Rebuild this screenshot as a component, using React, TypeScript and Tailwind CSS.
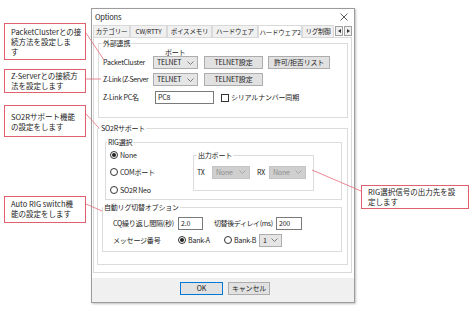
import React from "react";

// Small Windows-style controls used in the Options dialog
function Chevron({ color = "#606060" }: { color?: string }) {
  return (
    <svg width="7" height="4" viewBox="0 0 7 4" className="shrink-0">
      <polyline points="0.5,0.5 3.5,3.5 6.5,0.5" fill="none" stroke={color} strokeWidth="0.8" />
    </svg>
  );
}

function Btn({ className, children, primary }: { className: string; children: React.ReactNode; primary?: boolean }) {
  return (
    <div
      className={`flex h-[13px] shrink-0 items-center justify-center whitespace-nowrap border bg-[#e1e1e1] leading-none ${
        primary ? "border-[#0078d7]" : "border-[#adadad]"
      } ${className}`}
    >
      {children}
    </div>
  );
}

function Combo({ className, value, disabled }: { className: string; value: string; disabled?: boolean }) {
  return (
    <div
      className={`flex h-[13px] shrink-0 items-center justify-between border pl-[3px] pr-[3px] leading-none ${
        disabled ? "border-[#c4c4c4] bg-[#cfcfcf] text-[#8d8d8d]" : "border-[#adadad] bg-[#e5e5e5]"
      } ${className}`}
    >
      <span>{value}</span>
      <Chevron color={disabled ? "#9a9a9a" : "#606060"} />
    </div>
  );
}

function TextBox({ className, value }: { className: string; value: string }) {
  return (
    <div className={`flex h-[13px] shrink-0 items-center border border-[#7a7a7a] bg-white pl-[2px] leading-none ${className}`}>
      {value}
    </div>
  );
}

function Radio({ label, checked }: { label: string; checked?: boolean }) {
  return (
    <div className="flex items-center gap-[2px] whitespace-nowrap leading-none">
      <span className="flex h-[8px] w-[8px] shrink-0 items-center justify-center rounded-full border border-[#333] bg-white">
        {checked && <span className="h-[4px] w-[4px] rounded-full bg-[#222]" />}
      </span>
      <span>{label}</span>
    </div>
  );
}

function Callout({ className, children }: { className: string; children: React.ReactNode }) {
  return (
    <div
      className={`absolute whitespace-nowrap border border-[#e0606e] bg-white pl-[6px] text-[7.5px] leading-[10px] text-[#222] ${className}`}
    >
      {children}
    </div>
  );
}

const tabs = [
  { label: "カテゴリー", w: "w-[37px]" },
  { label: "CW/RTTY", w: "w-[37px]" },
  { label: "ボイスメモリ", w: "w-[45px]" },
  { label: "ハードウェア", w: "w-[46px]" },
  { label: "ハードウェア2", w: "w-[44px]", active: true },
  { label: "リグ制御", w: "w-[32px]" },
];

export default function App() {
  return (
    <div className="relative h-[317px] w-[474px] overflow-hidden bg-white font-['Noto_Sans_CJK_JP','Noto_Sans',sans-serif] text-[#1a1a1a]">
      {/* Options dialog */}
      <div className="absolute left-[91px] top-[8px] flex h-[295px] w-[264px] flex-col border border-[#9c9c9c] bg-white text-[7px] tracking-[-0.2px] shadow-[1px_1px_2px_rgba(0,0,0,0.25)]">
        {/* title bar */}
        <div className="flex h-[16px] items-center justify-between pl-[3px] pr-[6px] text-[7.5px]">
          <span>Options</span>
          <svg width="8" height="8" viewBox="0 0 8 8">
            <path d="M0.5 0.5 L7.5 7.5 M7.5 0.5 L0.5 7.5" stroke="#333" strokeWidth="0.8" />
          </svg>
        </div>

        {/* tabs */}
        <div className="relative z-10 ml-[1px] flex h-[12px] items-end text-[6.5px]">
          {tabs.map((t) => (
            <div
              key={t.label}
              className={`flex shrink-0 items-center justify-center overflow-hidden whitespace-nowrap border-x border-t border-[#d9d9d9] leading-none ${t.w} ${
                t.active ? "-mb-px h-[13px] bg-white" : "h-[12px] bg-[#f0f0f0]"
              }`}
            >
              {t.label}
            </div>
          ))}
          <div className="mb-[1px] ml-[1px] flex gap-[1px]">
            <div className="flex h-[10px] w-[8px] items-center justify-center border border-[#a0a0a0] bg-[#f0f0f0]">
              <svg width="3" height="4" viewBox="0 0 3 4"><polygon points="3,0 0,2 3,4" fill="#333" /></svg>
            </div>
            <div className="flex h-[10px] w-[8px] items-center justify-center border border-[#a0a0a0] bg-[#f0f0f0]">
              <svg width="3" height="4" viewBox="0 0 3 4"><polygon points="0,0 3,2 0,4" fill="#333" /></svg>
            </div>
          </div>
        </div>

        {/* tab page */}
        <div className="ml-[1px] mr-[2px] flex h-[236px] flex-col border border-[#d9d9d9] bg-white">
          {/* 外部連携 */}
          <fieldset className="ml-[4px] h-[80px] w-[250px] border border-[#dcdcdc]">
            <legend className="ml-[3px] px-[1px] leading-[10px]">外部連携</legend>
            <div className="flex h-[8px] items-center pl-[66px] leading-none">ポート</div>
            <div className="flex h-[13px] items-center pl-[4px]">
              <span className="w-[50px] shrink-0 whitespace-nowrap">PacketCluster</span>
              <Combo className="w-[45px]" value="TELNET" />
              <Btn className="ml-[6px] w-[59px]">TELNET設定</Btn>
              <Btn className="ml-[5px] w-[62px]">許可/拒否リスト</Btn>
            </div>
            <div className="mt-[4px] flex h-[13px] items-center pl-[4px]">
              <span className="w-[50px] shrink-0 whitespace-nowrap tracking-[-0.4px]">Z-Link (Z-Server</span>
              <Combo className="w-[45px]" value="TELNET" />
              <Btn className="ml-[6px] w-[59px]">TELNET設定</Btn>
            </div>
            <div className="mt-[5px] flex h-[13px] items-center pl-[4px]">
              <span className="w-[52px] shrink-0 whitespace-nowrap">Z-Link PC名</span>
              <TextBox className="w-[59px]" value="PC8" />
              <span className="ml-[7px] h-[8px] w-[8px] shrink-0 border border-[#333] bg-white" />
              <span className="ml-[2px] whitespace-nowrap">シリアルナンバー同期</span>
            </div>
          </fieldset>

          {/* SO2Rサポート */}
          <fieldset className="ml-[3px] mt-[5px] h-[142px] w-[251px] border border-[#dcdcdc]">
            <legend className="ml-[2px] px-[1px] leading-[10px]">SO2Rサポート</legend>

            <fieldset className="ml-[7px] mt-[4px] h-[63px] w-[237px] border border-[#dcdcdc]">
              <legend className="ml-[1px] px-[1px] leading-[10px]">RIG選択</legend>
              <div className="flex">
                <div className="flex w-[87px] flex-col pl-[4px]">
                  <div className="mt-[3px] flex h-[10px] items-center">
                    <Radio label="None" checked />
                  </div>
                  <div className="mt-[7px] flex h-[10px] items-center">
                    <Radio label="COMポート" />
                  </div>
                  <div className="mt-[8px] flex h-[10px] items-center">
                    <Radio label="SO2R Neo" />
                  </div>
                </div>
                <fieldset className="mt-[3px] h-[41px] w-[121px] border border-[#dcdcdc]">
                  <legend className="ml-[3px] px-[1px] leading-[10px]">出力ポート</legend>
                  <div className="mt-[6px] flex h-[12px] items-center pl-[3px]">
                    <span className="w-[15px] shrink-0">TX</span>
                    <Combo className="h-[12px] w-[38px]" value="None" disabled />
                    <span className="ml-[7px] w-[12px] shrink-0">RX</span>
                    <Combo className="h-[12px] w-[37px]" value="None" disabled />
                  </div>
                </fieldset>
              </div>
            </fieldset>

            <fieldset className="ml-[4px] mt-[2px] h-[50px] w-[240px] border border-[#dcdcdc]">
              <legend className="px-[1px] leading-[10px]">自動リグ切替オプション</legend>
              <div className="mt-[5px] flex h-[12px] items-center pl-[10px]">
                <span className="w-[65px] shrink-0 whitespace-nowrap">CQ繰り返し間隔(秒)</span>
                <TextBox className="h-[12px] w-[25px]" value="2.0" />
                <span className="ml-[11px] w-[62px] shrink-0 whitespace-nowrap tracking-[-0.4px]">切替後ディレイ(ms)</span>
                <TextBox className="h-[12px] w-[26px]" value="200" />
              </div>
              <div className="mt-[5px] flex h-[12px] items-center pl-[10px]">
                <span className="w-[65px] shrink-0 whitespace-nowrap">メッセージ番号</span>
                <div className="w-[46px] shrink-0">
                  <Radio label="Bank-A" checked />
                </div>
                <div className="w-[35px] shrink-0">
                  <Radio label="Bank-B" />
                </div>
                <Combo className="h-[12px] w-[23px]" value="1" />
              </div>
            </fieldset>
          </fieldset>
        </div>

        {/* footer */}
        <div className="mt-auto flex h-[24px] items-start bg-[#f0f0f0] pl-[88px] pt-[4px]">
          <Btn className="w-[43px]" primary>OK</Btn>
          <Btn className="ml-[5px] w-[42px]">キャンセル</Btn>
        </div>
      </div>

      {/* leader lines */}
      <svg className="pointer-events-none absolute left-0 top-0" width="474" height="317">
        <g stroke="#e36b79" strokeWidth="0.8" fill="none">
          <line x1="86" y1="33" x2="104" y2="60" />
          <line x1="86" y1="79" x2="101" y2="79" />
          <line x1="86" y1="114" x2="99" y2="128" />
          <line x1="86" y1="204" x2="102" y2="211" />
          <line x1="312" y1="170" x2="361" y2="191" />
        </g>
      </svg>

      {/* callouts */}
      <Callout className="left-[4px] top-[23px] h-[37px] w-[82px] pt-[3px]">
        PacketClusterとの接
        <br />
        続方法を設定しま
        <br />す
      </Callout>
      <Callout className="left-[4px] top-[69px] h-[24px] w-[82px] pt-[1px]">
        Z-Serverとの接続方
        <br />
        法を設定します
      </Callout>
      <Callout className="left-[4px] top-[105px] h-[32px] w-[82px] pt-[6px]">
        SO2Rサポート機能
        <br />
        の設定をします
      </Callout>
      <Callout className="left-[4px] top-[196px] h-[27px] w-[82px] pt-[2px]">
        Auto RIG switch機
        <br />
        能の設定をします
      </Callout>
      <Callout className="left-[361px] top-[185px] h-[24px] w-[108px] pt-[1px]">
        RIG選択信号の出力先を設
        <br />
        定します
      </Callout>
    </div>
  );
}
